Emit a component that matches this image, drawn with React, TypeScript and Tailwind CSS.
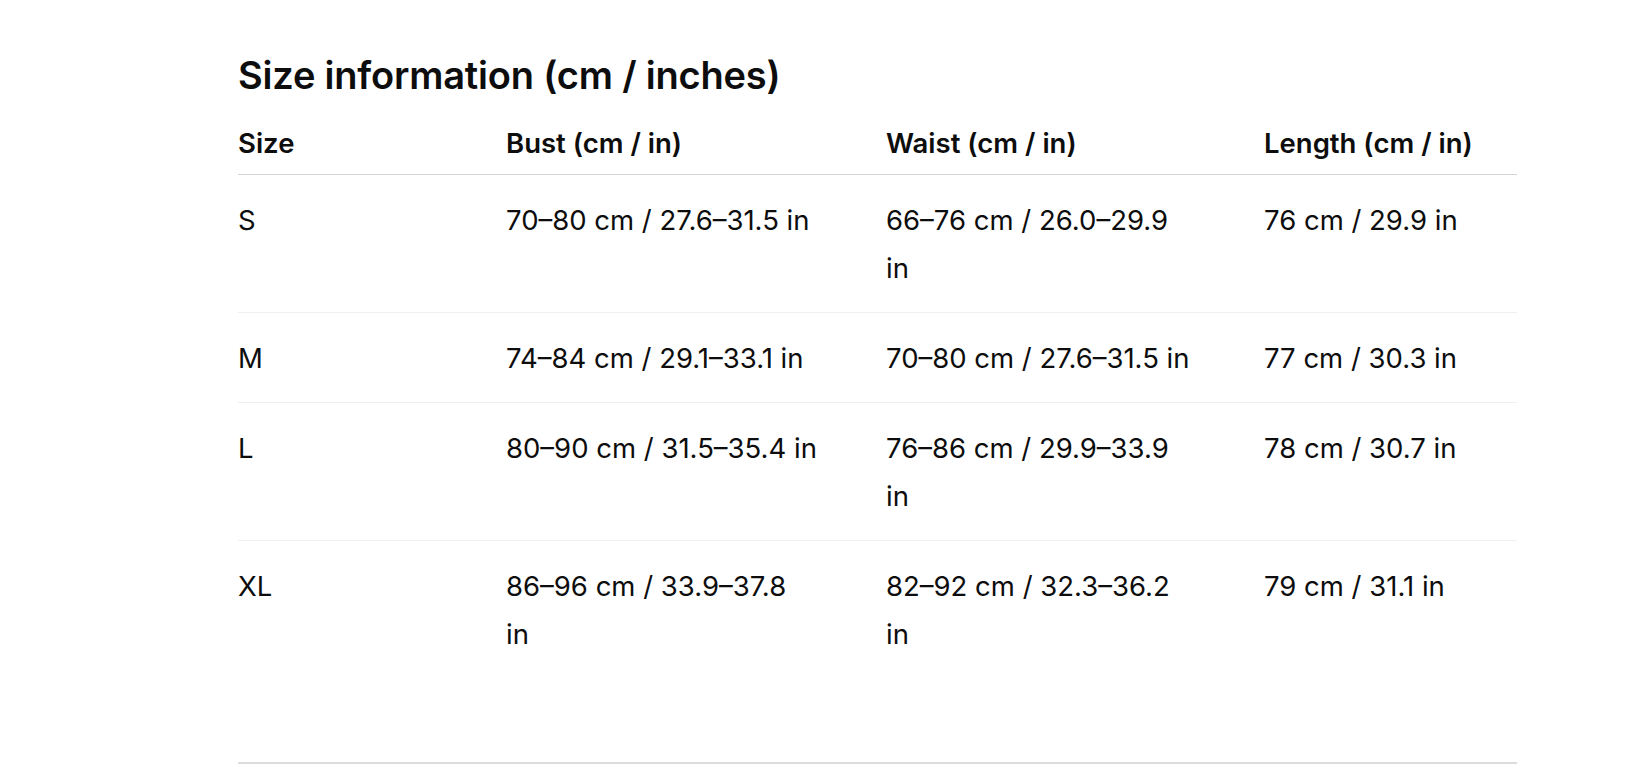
import React from "react";

type Row = { size: string; bust: string[]; waist: string[]; length: string[] };

const rows: Row[] = [
  { size: "S", bust: ["70–80 cm / 27.6–31.5 in"], waist: ["66–76 cm / 26.0–29.9", "in"], length: ["76 cm / 29.9 in"] },
  { size: "M", bust: ["74–84 cm / 29.1–33.1 in"], waist: ["70–80 cm / 27.6–31.5 in"], length: ["77 cm / 30.3 in"] },
  { size: "L", bust: ["80–90 cm / 31.5–35.4 in"], waist: ["76–86 cm / 29.9–33.9", "in"], length: ["78 cm / 30.7 in"] },
  { size: "XL", bust: ["86–96 cm / 33.9–37.8", "in"], waist: ["82–92 cm / 32.3–36.2", "in"], length: ["79 cm / 31.1 in"] },
];

function Cell({ lines }: { lines: string[] }) {
  return (
    <div className="flex flex-col">
      {lines.map((l, i) => (
        <span key={i} className="whitespace-nowrap">{l}</span>
      ))}
    </div>
  );
}

export default function App() {
  return (
    <div
      className="w-[1630px] h-[768px] overflow-hidden bg-white text-[#0d0d0d]"
      style={{ fontFamily: "Inter, 'Noto Sans', sans-serif" }}
    >
      <div className="ml-[238px] w-[1279px] pt-[53px]">
        <h2 className="text-[38px] leading-[44px] font-semibold tracking-[-0.2px] mb-[30px]">
          Size information (cm / inches)
        </h2>
        <div className="grid grid-cols-[268px_380px_378px_253px] border-b border-[#d4d4d4] text-[27.5px] leading-[32px] font-semibold pb-[15px]">
          <div>Size</div>
          <div>Bust (cm / in)</div>
          <div>Waist (cm / in)</div>
          <div>Length (cm / in)</div>
        </div>
        {rows.map((r, i) => (
          <div
            key={r.size}
            className={
              "grid grid-cols-[268px_380px_378px_253px] text-[27.5px] leading-[48px] pt-[21px] " +
              (i === rows.length - 1 ? "pb-[104px] border-b-2 border-[#dcdcdc]" : "pb-[20px] border-b border-[#efefef]")
            }
          >
            <div>{r.size}</div>
            <Cell lines={r.bust} />
            <Cell lines={r.waist} />
            <Cell lines={r.length} />
          </div>
        ))}
      </div>
    </div>
  );
}
